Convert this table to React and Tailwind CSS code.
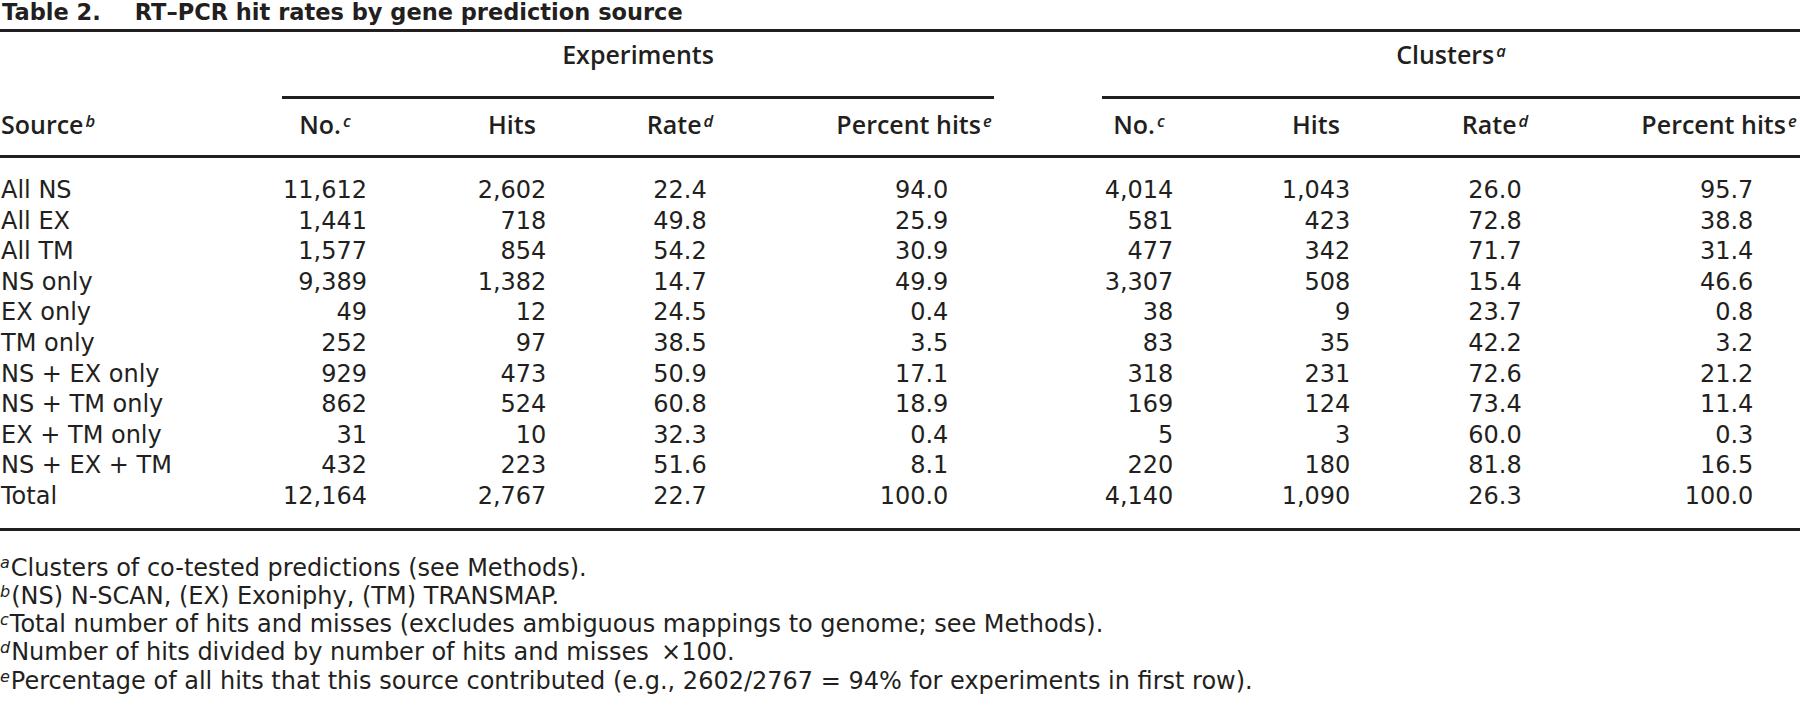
const rows = [
  ['All NS', '11,612', '2,602', '22.4', '94.0', '4,014', '1,043', '26.0', '95.7'],
  ['All EX', '1,441', '718', '49.8', '25.9', '581', '423', '72.8', '38.8'],
  ['All TM', '1,577', '854', '54.2', '30.9', '477', '342', '71.7', '31.4'],
  ['NS only', '9,389', '1,382', '14.7', '49.9', '3,307', '508', '15.4', '46.6'],
  ['EX only', '49', '12', '24.5', '0.4', '38', '9', '23.7', '0.8'],
  ['TM only', '252', '97', '38.5', '3.5', '83', '35', '42.2', '3.2'],
  ['NS + EX only', '929', '473', '50.9', '17.1', '318', '231', '72.6', '21.2'],
  ['NS + TM only', '862', '524', '60.8', '18.9', '169', '124', '73.4', '11.4'],
  ['EX + TM only', '31', '10', '32.3', '0.4', '5', '3', '60.0', '0.3'],
  ['NS + EX + TM', '432', '223', '51.6', '8.1', '220', '180', '81.8', '16.5'],
  ['Total', '12,164', '2,767', '22.7', '100.0', '4,140', '1,090', '26.3', '100.0'],
];

const heads = [
  ['No.', 'c'],
  ['Hits', null],
  ['Rate', 'd'],
  ['Percent hits', 'e'],
  ['No.', 'c'],
  ['Hits', null],
  ['Rate', 'd'],
  ['Percent hits', 'e'],
];

const notes = [
  ['a', 'Clusters of co-tested predictions (see Methods).'],
  ['b', '(NS) N-SCAN, (EX) Exoniphy, (TM) TRANSMAP.'],
  ['c', 'Total number of hits and misses (excludes ambiguous mappings to genome; see Methods).'],
  ['d', 'Number of hits divided by number of hits and misses \u2009\u00d7100.'],
  ['e', 'Percentage of all hits that this source contributed (e.g., 2602/2767 = 94% for experiments in first row).'],
];

const Sup = ({ children }) => (
  <span className="relative -top-[0.42em] ml-[2px] text-[0.66em] italic leading-[0]">{children}</span>
);

const Rule = ({ className = '' }) => <div className={`h-[3px] bg-[#231f20] ${className}`} />;

const cols = 'grid grid-cols-[240px_170px_204px_132px_336px_114px_240px_118px_246px]';
const groups = 'grid grid-cols-[282px_712px_108px_698px]';

export default function App() {
  return (
    <div className="w-[1800px] h-[706px] overflow-hidden bg-white text-[#231f20]">
      {/* title */}
      <div className="h-[24px] whitespace-nowrap pl-[2px] font-['DejaVu_Sans',sans-serif] text-[22.5px] font-bold leading-[24px]">
        <span>Table 2.</span>
        <span className="ml-[34px]">RT–PCR hit rates by gene prediction source</span>
      </div>
      <Rule className="mt-[5px]" />

      {/* group headers */}
      <div className={`${groups} mt-[7px] font-['Open_Sans',sans-serif] text-[25px] font-semibold leading-[30px]`}>
        <div />
        <div className="text-center">Experiments</div>
        <div />
        <div className="text-center whitespace-nowrap">
          Clusters<Sup>a</Sup>
        </div>
      </div>
      <div className={`${groups} mt-[27px]`}>
        <div />
        <Rule />
        <div />
        <Rule />
      </div>

      {/* column headers */}
      <div className={`${cols} mt-[10px] font-['Open_Sans',sans-serif] text-[25px] font-semibold leading-[30px]`}>
        <div className="pl-[1px] whitespace-nowrap">
          Source<Sup>b</Sup>
        </div>
        {heads.map(([label, sup], i) => (
          <div key={i} className={`flex justify-center whitespace-nowrap ${i === 7 ? 'pl-[84px]' : ''}`}>
            <span>
              {label}
              {sup && <Sup>{sup}</Sup>}
            </span>
          </div>
        ))}
      </div>
      <Rule className="mt-[16px]" />

      {/* body */}
      <div className={`${cols} mt-[17px] font-['DejaVu_Sans',sans-serif] text-[24px] leading-[30.6px]`}>
        <div className="flex flex-col pl-[1px] whitespace-nowrap">
          {rows.map((r) => (
            <div key={r[0]}>{r[0]}</div>
          ))}
        </div>
        {heads.map((_, c) => (
          <div key={c} className={`flex justify-center ${c === 7 ? 'pl-[84px]' : ''}`}>
            <div className="flex flex-col items-end">
              {rows.map((r) => (
                <div key={r[0]}>{r[c + 1]}</div>
              ))}
            </div>
          </div>
        ))}
      </div>
      <Rule className="mt-[16px]" />

      {/* footnotes */}
      <div className="mt-[23px] font-['DejaVu_Sans',sans-serif] text-[24px] leading-[28.3px]">
        {notes.map(([k, t]) => (
          <div key={k} className="whitespace-nowrap">
            <span className="relative -top-[0.45em] mr-[1px] text-[16px] italic leading-[0]">{k}</span>
            {t}
          </div>
        ))}
      </div>
    </div>
  );
}
